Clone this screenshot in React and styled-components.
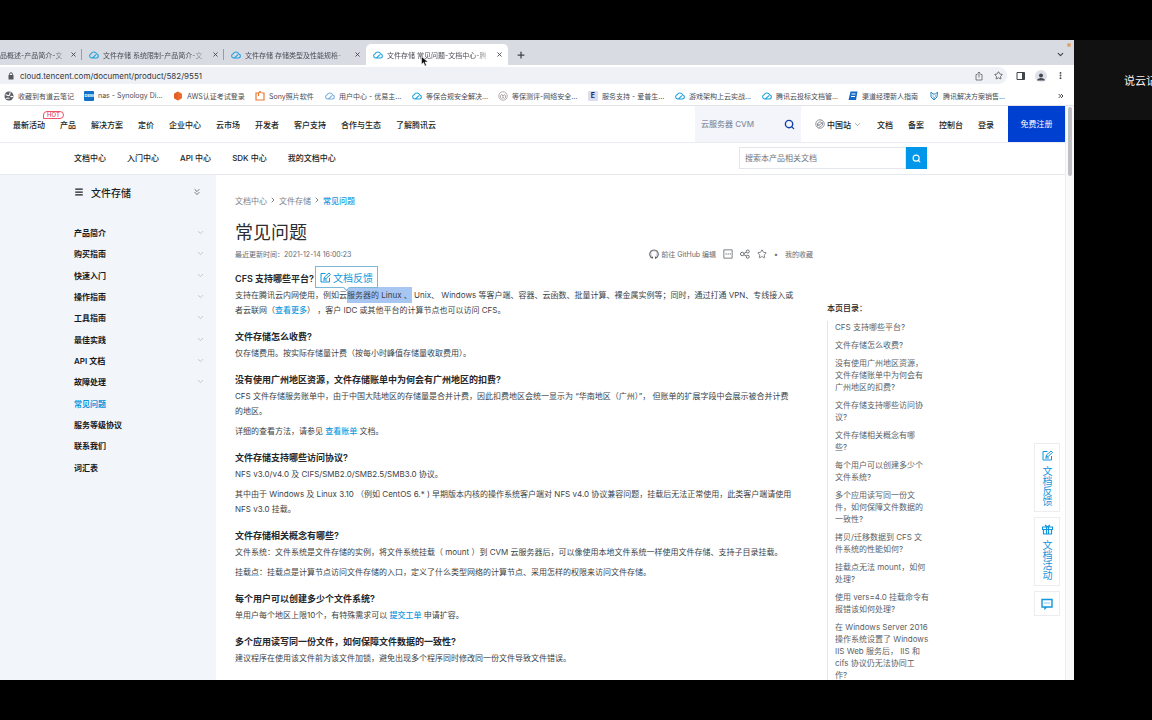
import React from "react";
import styled, { createGlobalStyle, css } from "styled-components";
import {
  ChevronDown,
  ChevronRight,
  ChevronsDown,
  ChevronsRight,
  Menu,
  MoreVertical,
  Plus,
  Search,
  Star,
  X,
} from "lucide-react";

/** Styles */
const GlobalStyle = createGlobalStyle`
  * {
    box-sizing: border-box;
  }
  body {
    margin: 0;
    background: #000;
    font-family: Inter, "Noto Sans CJK SC", sans-serif;
    font-size: 8px;
    color: #1c1e22;
  }
  h1, h2, h3, p, ul {
    margin: 0;
    padding: 0;
  }
  ul {
    list-style: none;
  }
  a {
    color: inherit;
    text-decoration: none;
  }
  button, input {
    margin: 0;
    padding: 0;
    border: 0;
    background: none;
    color: inherit;
    font: inherit;
  }
  svg {
    display: block;
    flex: none;
  }
`;

const Stage = styled.div`
  display: grid;
  grid-template-columns: minmax(0, 1fr) 78px;
  height: 100vh;
  padding: 40px 0;
  overflow: hidden;
`;
const Browser = styled.div`
  display: flex;
  flex-direction: column;
  min-height: 0;
  background: #fff;
`;
const Participant = styled.aside`
  height: 80px;
  padding-left: 50px;
  overflow: hidden;
  background: #111;
  color: #f2f2f2;
  font-size: 11px;
  line-height: 83px;
  white-space: nowrap;
`;

/** Browser chrome */
const TabStrip = styled.div`
  position: relative;
  display: flex;
  align-items: flex-end;
  flex: none;
  height: 25px;
  background: #d9dbe3;
`;
const Tab = styled.div`
  display: flex;
  align-items: center;
  gap: 4px;
  width: ${({ $cut }) => ($cut ? "82px" : "142px")};
  height: 21px;
  padding: 0 5px 0 ${({ $cut }) => ($cut ? "0" : "7px")};
  color: #4a4d55;
  font-size: 7px;
  ${({ $active }) =>
    $active &&
    css`
      border-radius: 5px 5px 0 0;
      background: #fff;
    `}
`;
const TabTitle = styled.span`
  flex: 1;
  overflow: hidden;
  white-space: nowrap;
  mask-image: linear-gradient(90deg, #000 82%, transparent);
`;
const TabDivider = styled.span`
  width: 1px;
  height: 11px;
  margin-bottom: 5px;
  margin-left: -1px;
  background: #9a9ca5;
`;
const IconButton = styled.button`
  display: flex;
  align-items: center;
  justify-content: center;
  color: ${({ $color }) => $color || "#3f4249"};
`;
const NewTab = styled(IconButton)`
  height: 21px;
  margin-left: 8px;
`;
const TabMenu = styled(IconButton)`
  height: 21px;
  margin-right: 9px;
  margin-left: auto;
`;
const RecordDot = styled.span`
  position: absolute;
  top: 3px;
  right: 3px;
  width: 4px;
  height: 4px;
  border-radius: 50%;
  background: #e0a36c;
`;
const Cursor = styled.svg`
  position: absolute;
  top: 16px;
  left: 421px;
`;
const AddressRow = styled.div`
  display: flex;
  align-items: center;
  flex: none;
  gap: 9px;
  height: 21px;
  padding-right: 9px;
`;
const AddressBar = styled.div`
  display: flex;
  align-items: center;
  flex: 1;
  gap: 10px;
  height: 17px;
  padding: 0 4px 0 8px;
  border-radius: 0 9px 9px 0;
  background: #f0f1f6;
`;
const AddressInput = styled.input`
  flex: 1;
  margin-left: -4px;
  color: #34373d;
  outline: none;
`;
const Avatar = styled.span`
  display: flex;
  align-items: flex-end;
  justify-content: center;
  width: 12px;
  height: 12px;
  overflow: hidden;
  border-radius: 50%;
  background: #dfe1e8;
`;
const Bookmarks = styled.div`
  display: flex;
  align-items: center;
  flex: none;
  height: 20px;
  padding: 0 9px 0 4px;
  border-bottom: 1px solid #e3e4e8;
`;
const Bookmark = styled.a`
  display: flex;
  align-items: center;
  gap: 4px;
  width: ${({ $width }) => $width}px;
  color: #494c53;
  font-size: 7px;
  white-space: nowrap;
`;
const More = styled(IconButton)`
  margin-left: auto;
`;
const Favicon = styled.span`
  display: flex;
  align-items: center;
  justify-content: center;
  flex: none;
  width: 10px;
  height: 10px;
  border-radius: 1px;
  background: ${({ $bg }) => $bg};
  color: ${({ $color }) => $color || "#fff"};
  font-size: ${({ $small }) => ($small ? "4px" : "7px")};
  font-weight: 700;
`;

/** Site */
const Viewport = styled.div`
  position: relative;
  display: grid;
  grid-template-columns: minmax(0, 1fr) 9px;
  flex: 1;
  min-height: 0;
  overflow: hidden;
`;
const Scrollbar = styled.div`
  padding: 1px 2px;
  border-left: 1px solid #ededf0;
  background: #fafafb;
`;
const Thumb = styled.div`
  height: 69px;
  border-radius: 3px;
  background: #bfc0c4;
`;
const Site = styled.div`
  min-width: 0;
`;
const TopBar = styled.header`
  display: flex;
  align-items: center;
  height: 37px;
  padding-left: 13px;
  border-bottom: 1px solid #ebecf1;
  font-weight: 500;
`;
const TopNav = styled.nav`
  display: flex;
  gap: 15px;
  white-space: nowrap;
`;
const TopLink = styled.a`
  position: relative;
`;
const Hot = styled.span`
  position: absolute;
  top: -8px;
  left: 30px;
  padding: 0 3px;
  border: 1px solid #ee5468;
  border-radius: 4px 4px 4px 0;
  color: #e5455a;
  font-size: 6px;
  line-height: 6px;
`;
const TopSearch = styled.form`
  display: flex;
  align-items: center;
  width: 106px;
  height: 36px;
  margin-left: auto;
  padding: 0 6px;
  background: #f4f5fa;
  color: #0f3fa8;
`;
const TopSearchInput = styled.input`
  flex: 1;
  min-width: 0;
  outline: none;
  &::placeholder {
    color: #8b90a0;
  }
`;
const Account = styled.div`
  display: flex;
  align-items: center;
  gap: 15px;
  padding: 0 14px;
  white-space: nowrap;
`;
const Region = styled(IconButton)`
  gap: 2px;
`;
const Register = styled.a`
  width: 57px;
  height: 36px;
  background: #0040d0;
  color: #fff;
  font-weight: 400;
  line-height: 36px;
  text-align: center;
`;
const SubBar = styled.div`
  display: flex;
  align-items: flex-start;
  justify-content: space-between;
  height: 32px;
  padding: 4px 138px 0 74px;
  border-bottom: 1px solid #e6e8ec;
`;
const SubNav = styled.nav`
  display: flex;
  gap: 21px;
  font-weight: 500;
  line-height: 22px;
`;
const DocSearch = styled.form`
  display: flex;
  width: 188px;
  height: 22px;
`;
const DocSearchInput = styled.input`
  flex: 1;
  min-width: 0;
  padding-left: 5px;
  border: 1px solid #e3e6eb;
  outline: none;
  &::placeholder {
    color: #70747c;
  }
`;
const DocSearchButton = styled(IconButton)`
  width: 21px;
  background: #0096ea;
`;
const Body = styled.div`
  display: grid;
  grid-template-columns: 216px minmax(0, 1fr) 238px;
`;
const Sidebar = styled.aside`
  min-height: 506px;
  padding: 7px 11px 0 74px;
  background: #f2f5fa;
`;
const SideTitle = styled.h2`
  display: flex;
  align-items: center;
  gap: 7px;
  height: 20px;
  padding-right: 3px;
  font-size: 10px;
  font-weight: 500;
  svg:last-child {
    margin-left: auto;
  }
`;
const SideList = styled.ul`
  display: grid;
  grid-auto-rows: 1fr;
  height: 256px;
  margin-top: 20px;
`;
const SideItem = styled.li`
  display: flex;
  align-items: center;
  justify-content: space-between;
  color: ${({ $active }) => ($active ? "#1296db" : "#16181c")};
  font-weight: 600;
  svg {
    color: #b3b8c1;
  }
`;

/** Article */
const Article = styled.main`
  padding: 17px 14px 0 19px;
  color: #3c3f45;
  white-space: nowrap;
`;
const Crumbs = styled.nav`
  display: flex;
  align-items: center;
  gap: 2px;
  height: 16px;
  color: #7d8189;
`;
const Crumb = styled.a`
  color: ${({ $current }) => $current && "#0f9ae0"};
  font-weight: ${({ $current }) => $current && "500"};
`;
const PageTitle = styled.h1`
  margin-top: 10px;
  color: #2b2d31;
  font-size: 18px;
  font-weight: 400;
  line-height: 30px;
`;
const Meta = styled.div`
  display: flex;
  align-items: center;
  justify-content: space-between;
  height: 12px;
  color: #666a71;
  font-size: 7px;
`;
const Actions = styled.div`
  display: flex;
  align-items: center;
  gap: 7px;
`;
const ActionLink = styled.a`
  display: flex;
  align-items: center;
  gap: 2px;
`;
const Question = styled.section`
  position: relative;
  margin-top: 11px;
`;
const QuestionTitle = styled.h3`
  margin-bottom: 2px;
  color: #24262a;
  font-size: 9px;
  font-weight: 600;
  line-height: 15px;
`;
const Paragraph = styled.p`
  line-height: 15px;
  & + & {
    margin-top: 5px;
  }
`;
const TextLink = styled.a`
  color: #0f9ae0;
  font-weight: 500;
`;
const Selection = styled.mark`
  padding: 3px 0;
  background: #a7c6f2;
  color: inherit;
`;
const Feedback = styled.button`
  position: absolute;
  top: -5px;
  left: 80px;
  display: flex;
  align-items: center;
  gap: 2px;
  height: 22px;
  padding: 0 4px;
  border: 1px solid #7db8d8;
  background: #fff;
  color: #1296db;
  font-size: 10px;
  &::after {
    content: "";
    position: absolute;
    bottom: -3px;
    left: 28px;
    width: 4px;
    height: 4px;
    border: solid #7db8d8;
    border-width: 0 1px 1px 0;
    background: #fff;
    transform: rotate(45deg);
  }
`;

/** Page contents */
const Toc = styled.aside`
  padding-top: 125px;
  color: #5b5f66;
  white-space: nowrap;
`;
const TocTitle = styled.h2`
  color: #24262a;
  font-size: 8px;
  font-weight: 500;
  line-height: 16px;
`;
const TocList = styled.ul`
  display: flex;
  flex-direction: column;
  gap: 6px;
  margin-top: 5px;
  padding-left: 7px;
  border-left: 1px solid #e3e5ea;
  line-height: 12px;
`;
const SideTools = styled.div`
  position: absolute;
  top: 337px;
  right: 14px;
  display: flex;
  flex-direction: column;
  gap: 5px;
`;
const Tool = styled.button`
  display: flex;
  flex-direction: column;
  align-items: center;
  gap: 5px;
  width: 26px;
  padding: 6px 0 5px;
  border: 1px solid #ebedf1;
  background: #fff;
  color: #1296db;
  font-size: 10px;
  line-height: 12px;
`;
const Vertical = styled.span`
  writing-mode: vertical-rl;
`;

/** Icons */
const CloudIcon = ({ size = 10, color = "#1ba2e0" }) => (
  <svg width={size} height={size} viewBox="0 0 20 20" fill="none" stroke={color} strokeWidth="2.2" strokeLinecap="round">
    <path d="M8 16h7a4 4 0 0 0 .6-7.9A6 6 0 0 0 4.4 7.6 4.3 4.3 0 0 0 5 16c1.5 0 2.6-.6 3.6-1.6l4.8-4.7" />
  </svg>
);
const GlobeIcon = () => (
  <svg width="10" height="10" viewBox="0 0 20 20">
    <circle cx="10" cy="10" r="9" fill="#5b5e65" />
    <path d="M3 8c3-1 4 2 7 1s0-4 3-6M5 16c1-3 4-2 6-1m2-3c2-2 3-1 5-1" fill="none" stroke="#fff" strokeWidth="2.2" />
  </svg>
);
const CubeIcon = () => (
  <svg width="10" height="10" viewBox="0 0 20 20">
    <path d="M10 1l8 4.500v9L10 19l-8-4.500v-9z" fill="#ee6a2c" />
    <path d="M10 1v18l-8-4.500v-9z" fill="#d9531e" opacity=".5" />
  </svg>
);
const BagIcon = () => (
  <svg width="10" height="10" viewBox="0 0 20 20" fill="none" stroke="#ee7a33" strokeWidth="2.4">
    <path d="M6 4H2v14h16V4h-4M7 10V4l3-3 3 3" />
  </svg>
);
const RingIcon = () => (
  <svg width="10" height="10" viewBox="0 0 20 20" fill="none" stroke="#9b9298" strokeWidth="1.5">
    <circle cx="10" cy="10" r="8.5" />
    <path d="M5 14V9l3-2 2 4 2-4 3 2v5M7 16l3-4 3 4" />
  </svg>
);
const PageIcon = () => (
  <svg width="10" height="10" viewBox="0 0 20 20">
    <path d="M5 1h14l-3 17H1z" fill="#1769c7" />
    <path d="M7 6h8M6 11h8" stroke="#fff" strokeWidth="2" />
  </svg>
);
const FoxIcon = () => (
  <svg width="10" height="10" viewBox="0 0 20 20" fill="none" stroke="#2687c9" strokeWidth="2">
    <path d="M4 2l4 4h5l4-4-1 10-6 6-6-6zM7 10h2m3 0h2M8 14h4" />
  </svg>
);
const LockIcon = () => (
  <svg width="6" height="8" viewBox="0 0 12 16">
    <path d="M3 7V4.500a3 3 0 0 1 6 0V7" fill="none" stroke="#55585f" strokeWidth="2" />
    <path d="M1 6h10v9H1z" fill="#55585f" />
  </svg>
);
const ShareIcon = () => (
  <svg width="10" height="10" viewBox="0 0 20 20" fill="none" stroke="#5d6067" strokeWidth="1.6">
    <path d="M7 7H4v11h12V7h-3M10 13V2M7 5l3-3 3 3" />
  </svg>
);
const PanelIcon = () => (
  <svg width="10" height="10" viewBox="0 0 20 20">
    <path d="M2 3h15v14H2z" fill="none" stroke="#41444b" strokeWidth="2" />
    <path d="M12 3h5v14h-5z" fill="#41444b" />
  </svg>
);
const CommentIcon = ({ size = 12, tail }) => (
  <svg width={size} height={size} viewBox="0 0 24 24" fill="none" stroke="currentColor" strokeWidth={tail ? 2.8 : 2}>
    <path d={tail ? "M2 3h20v15H11l-3 3v-3H2z" : "M2 2h20v20H2z"} />
    <path d={tail ? "M7 10h2m2 0h2m2 0h2" : "M6 12h3m2 0h3m2 0h3"} strokeWidth="2.4" />
  </svg>
);
const StationIcon = () => (
  <svg width="10" height="10" viewBox="0 0 20 20" fill="none" stroke="#74777e" strokeWidth="1.5">
    <circle cx="10" cy="10" r="8.5" />
    <path d="M13 3L5 9v5l3-1 7-6v5l-8 6M5 10l4 1m2-4l4 1" />
  </svg>
);
const GithubIcon = () => (
  <svg width="10" height="10" viewBox="0 0 20 20" fill="none" stroke="#5f636a" strokeWidth="2.2">
    <path d="M7 19v-3.500C4.500 14 4 11.500 4.500 8.500L4 3l3.500 1.500a10 10 0 0 1 5 0L16 3l-.5 5.500c.5 3 0 5.500-2.500 7V19M7 18c-3 .5-3.500-2-5.500-2.500" opacity=".25" />
    <path d="M7 18.500a8.500 8.500 0 1 1 6 0v-3M7 18.500v-3" />
  </svg>
);
const NodesIcon = () => (
  <svg width="10" height="10" viewBox="0 0 20 20" fill="none" stroke="#5f636a" strokeWidth="1.8">
    <circle cx="4.5" cy="10" r="3.5" />
    <circle cx="15.5" cy="5" r="3" />
    <circle cx="15.5" cy="15.500" r="3" />
    <path d="M8 9l5-3M8 11.500l5 2.500" />
  </svg>
);
const EditIcon = () => (
  <svg width="11" height="11" viewBox="0 0 22 22" fill="none" stroke="currentColor" strokeWidth="2">
    <path d="M11 3H2v17h17v-8M8 14l1-4 9-8 3 3-9 8z" />
    <path d="M6 16h8" />
  </svg>
);
const GiftIcon = () => (
  <svg width="11" height="11" viewBox="0 0 22 22" fill="none" stroke="currentColor" strokeWidth="2.4">
    <path d="M1 6h20v5H1zM3 11v9h16v-9M9 6v14M13 6v14M11 6L6 2M11 6l5-4" />
  </svg>
);

/** Data */
const bookmarks = [
  { label: "收藏到有道云笔记", width: 80, icon: <GlobeIcon /> },
  { label: "nas - Synology Di...", width: 89, icon: <Favicon $bg="#1071c6" $small>DSM</Favicon> },
  { label: "AWS认证考试登录", width: 82, icon: <CubeIcon /> },
  { label: "Sony照片软件", width: 70, icon: <BagIcon /> },
  { label: "用户中心 - 优易主...", width: 87, icon: <CloudIcon color="#77aee0" /> },
  { label: "等保合规安全解决...", width: 86, icon: <CloudIcon /> },
  { label: "等保测评-网络安全...", width: 90, icon: <RingIcon /> },
  { label: "服务支持 - 爱普生...", width: 87, icon: <Favicon $bg="#dcdcf0" $color="#26235e">E</Favicon> },
  { label: "游戏架构上云实战...", width: 87, icon: <CloudIcon /> },
  { label: "腾讯云投标文档管...", width: 86, icon: <CloudIcon /> },
  { label: "渠道经理新人指南", width: 81, icon: <PageIcon /> },
  { label: "腾讯解决方案销售...", width: 80, icon: <FoxIcon /> },
];

const topLinks = ["最新活动", "产品", "解决方案", "定价", "企业中心", "云市场", "开发者", "客户支持", "合作与生态", "了解腾讯云"];
const subLinks = ["文档中心", "入门中心", "API 中心", "SDK 中心", "我的文档中心"];

const sideItems = [
  { label: "产品简介", open: true },
  { label: "购买指南", open: true },
  { label: "快速入门", open: true },
  { label: "操作指南", open: true },
  { label: "工具指南", open: true },
  { label: "最佳实践", open: true },
  { label: "API 文档", open: true },
  { label: "故障处理", open: true },
  { label: "常见问题", active: true },
  { label: "服务等级协议" },
  { label: "联系我们" },
  { label: "词汇表" },
];

const toc = [
  ["CFS 支持哪些平台?"],
  ["文件存储怎么收费?"],
  ["没有使用广州地区资源，", "文件存储账单中为何会有", "广州地区的扣费?"],
  ["文件存储支持哪些访问协", "议?"],
  ["文件存储相关概念有哪", "些?"],
  ["每个用户可以创建多少个", "文件系统?"],
  ["多个应用读写同一份文", "件，如何保障文件数据的", "一致性?"],
  ["拷贝/迁移数据到 CFS 文", "件系统的性能如何?"],
  ["挂载点无法 mount，如何", "处理?"],
  ["使用 vers=4.0 挂载命令有", "报错该如何处理?"],
  ["在 Windows Server 2016", "操作系统设置了 Windows", "IIS Web 服务后， IIS 和", "cifs 协议仍无法协同工", "作?"],
];

/** Components */
function BrowserChrome() {
  return (
    <>
      <TabStrip>
        <Tab $cut>
          <TabTitle>品概述-产品简介-文</TabTitle>
          <IconButton aria-label="关闭"><X size={7} strokeWidth={3} /></IconButton>
        </Tab>
        <TabDivider />
        <Tab>
          <CloudIcon />
          <TabTitle>文件存储 系统限制-产品简介-文</TabTitle>
          <IconButton aria-label="关闭"><X size={7} strokeWidth={3} /></IconButton>
        </Tab>
        <TabDivider />
        <Tab>
          <CloudIcon />
          <TabTitle>文件存储 存储类型及性能规格-</TabTitle>
          <IconButton aria-label="关闭"><X size={7} strokeWidth={3} /></IconButton>
        </Tab>
        <Tab $active>
          <CloudIcon />
          <TabTitle>文件存储 常见问题-文档中心-腾</TabTitle>
          <IconButton aria-label="关闭"><X size={7} strokeWidth={3} /></IconButton>
        </Tab>
        <NewTab aria-label="新标签页"><Plus size={10} strokeWidth={3} /></NewTab>
        <TabMenu aria-label="搜索标签页"><ChevronDown size={9} strokeWidth={3} /></TabMenu>
        <RecordDot />
        <Cursor width="8" height="11" viewBox="0 0 16 22">
          <path d="M1 1v16l4-4 3 7 3-1-3-7h6z" fill="#111" stroke="#fff" strokeWidth="1" />
        </Cursor>
      </TabStrip>
      <AddressRow>
        <AddressBar>
          <LockIcon />
          <AddressInput aria-label="地址" defaultValue="cloud.tencent.com/document/product/582/9551" />
          <IconButton aria-label="分享"><ShareIcon /></IconButton>
          <IconButton aria-label="收藏"><Star size={9} strokeWidth={2} /></IconButton>
        </AddressBar>
        <IconButton aria-label="侧边栏"><PanelIcon /></IconButton>
        <Avatar>
          <svg width="10" height="10" viewBox="0 0 20 20" fill="#454850">
            <circle cx="10" cy="7" r="4" />
            <path d="M2 17c0-7 16-7 16 0z" />
          </svg>
        </Avatar>
        <IconButton aria-label="更多"><MoreVertical size={9} strokeWidth={3} /></IconButton>
      </AddressRow>
      <Bookmarks>
        {bookmarks.map(({ label, width, icon }) => (
          <Bookmark key={label} href="#" $width={width}>
            {icon}
            {label}
          </Bookmark>
        ))}
        <More aria-label="更多书签"><ChevronsRight size={8} strokeWidth={3} /></More>
      </Bookmarks>
    </>
  );
}

function Header() {
  return (
    <>
      <TopBar>
        <TopNav>
          {topLinks.map((label, i) => (
            <TopLink key={label} href="#">
              {label}
              {i === 0 && <Hot>HOT</Hot>}
            </TopLink>
          ))}
        </TopNav>
        <TopSearch>
          <TopSearchInput aria-label="搜索" placeholder="云服务器 CVM" />
          <IconButton type="button" aria-label="搜索" $color="#0f3fa8"><Search size={11} strokeWidth={3} /></IconButton>
        </TopSearch>
        <Account>
          <Region $color="#1c1e22">
            <StationIcon />
            中国站
            <ChevronDown size={9} strokeWidth={1} />
          </Region>
          <a href="#">文档</a>
          <a href="#">备案</a>
          <a href="#">控制台</a>
          <a href="#">登录</a>
        </Account>
        <Register href="#">免费注册</Register>
      </TopBar>
      <SubBar>
        <SubNav>
          {subLinks.map((label) => (
            <a key={label} href="#">{label}</a>
          ))}
        </SubNav>
        <DocSearch>
          <DocSearchInput aria-label="搜索文档" placeholder="搜索本产品相关文档" />
          <DocSearchButton type="button" aria-label="搜索文档" $color="#fff"><Search size={9} strokeWidth={3} /></DocSearchButton>
        </DocSearch>
      </SubBar>
    </>
  );
}

function SideMenu() {
  return (
    <Sidebar>
      <SideTitle>
        <Menu size={10} strokeWidth={3} />
        文件存储
        <ChevronsDown size={10} strokeWidth={2} color="#555961" />
      </SideTitle>
      <SideList>
        {sideItems.map(({ label, open, active }) => (
          <SideItem key={label} $active={active}>
            <a href="#">{label}</a>
            {open && <ChevronDown size={9} strokeWidth={2} />}
          </SideItem>
        ))}
      </SideList>
    </Sidebar>
  );
}

function Doc() {
  return (
    <Article>
      <Crumbs>
        <Crumb href="#">文档中心</Crumb>
        <ChevronRight size={8} strokeWidth={3} />
        <Crumb href="#">文件存储</Crumb>
        <ChevronRight size={8} strokeWidth={3} />
        <Crumb href="#" $current>常见问题</Crumb>
      </Crumbs>
      <PageTitle>常见问题</PageTitle>
      <Meta>
        <span>最近更新时间：2021-12-14 16:00:23</span>
        <Actions>
          <ActionLink href="#">
            <GithubIcon />
            前往 GitHub 编辑
          </ActionLink>
          <CommentIcon size={10} />
          <NodesIcon />
          <Star size={10} strokeWidth={2} />
          <span>•</span>
          <a href="#">我的收藏</a>
        </Actions>
      </Meta>
      <Question>
        <QuestionTitle>CFS 支持哪些平台?</QuestionTitle>
        <Paragraph>
          支持在腾讯云内网使用，例如云<Selection>服务器的 Linux 、</Selection> Unix、 Windows 等客户端、容器、云函数、批量计算、裸金属实例等；同时，通过打通 VPN、专线接入或
          <br />
          者云联网（<TextLink href="#">查看更多</TextLink>） ，客户 IDC 或其他平台的计算节点也可以访问 CFS。
        </Paragraph>
        <Feedback>
          <EditIcon />
          文档反馈
        </Feedback>
      </Question>
      <Question>
        <QuestionTitle>文件存储怎么收费?</QuestionTitle>
        <Paragraph>仅存储费用。按实际存储量计费（按每小时峰值存储量收取费用）。</Paragraph>
      </Question>
      <Question>
        <QuestionTitle>没有使用广州地区资源，文件存储账单中为何会有广州地区的扣费?</QuestionTitle>
        <Paragraph>
          CFS 文件存储服务账单中，由于中国大陆地区的存储量是合并计费，因此扣费地区会统一显示为 “华南地区（广州）”， 但账单的扩展字段中会展示被合并计费
          <br />
          的地区。
        </Paragraph>
        <Paragraph>
          详细的查看方法，请参见 <TextLink href="#">查看账单</TextLink> 文档。
        </Paragraph>
      </Question>
      <Question>
        <QuestionTitle>文件存储支持哪些访问协议?</QuestionTitle>
        <Paragraph>NFS v3.0/v4.0 及 CIFS/SMB2.0/SMB2.5/SMB3.0 协议。</Paragraph>
        <Paragraph>
          其中由于 Windows 及 Linux 3.10 （例如 CentOS 6.* ) 早期版本内核的操作系统客户端对 NFS v4.0 协议兼容问题，挂载后无法正常使用，此类客户端请使用
          <br />
          NFS v3.0 挂载。
        </Paragraph>
      </Question>
      <Question>
        <QuestionTitle>文件存储相关概念有哪些?</QuestionTitle>
        <Paragraph>文件系统：文件系统是文件存储的实例，将文件系统挂载（ mount ）到 CVM 云服务器后，可以像使用本地文件系统一样使用文件存储、支持子目录挂载。</Paragraph>
        <Paragraph>挂载点：挂载点是计算节点访问文件存储的入口，定义了什么类型网络的计算节点、采用怎样的权限来访问文件存储。</Paragraph>
      </Question>
      <Question>
        <QuestionTitle>每个用户可以创建多少个文件系统?</QuestionTitle>
        <Paragraph>
          单用户每个地区上限10个，有特殊需求可以 <TextLink href="#">提交工单</TextLink> 申请扩容。
        </Paragraph>
      </Question>
      <Question>
        <QuestionTitle>多个应用读写同一份文件，如何保障文件数据的一致性?</QuestionTitle>
        <Paragraph>建议程序在使用该文件前为该文件加锁，避免出现多个程序同时修改同一份文件导致文件错误。</Paragraph>
      </Question>
    </Article>
  );
}

function Contents() {
  return (
    <Toc>
      <TocTitle>本页目录：</TocTitle>
      <TocList>
        {toc.map((lines) => (
          <li key={lines[0]}>
            <a href="#">
              {lines.map((line, i) => (
                <React.Fragment key={line}>
                  {i > 0 && <br />}
                  {line}
                </React.Fragment>
              ))}
            </a>
          </li>
        ))}
      </TocList>
    </Toc>
  );
}

function App() {
  return (
    <Stage>
      <GlobalStyle />
      <Browser>
        <BrowserChrome />
        <Viewport>
          <Site>
            <Header />
            <Body>
              <SideMenu />
              <Doc />
              <Contents />
            </Body>
          </Site>
          <Scrollbar>
            <Thumb />
          </Scrollbar>
          <SideTools>
            <Tool>
              <EditIcon />
              <Vertical>文档反馈</Vertical>
            </Tool>
            <Tool>
              <GiftIcon />
              <Vertical>文档活动</Vertical>
            </Tool>
            <Tool aria-label="在线咨询">
              <CommentIcon tail />
            </Tool>
          </SideTools>
        </Viewport>
      </Browser>
      <Participant>说云记</Participant>
    </Stage>
  );
}
export default App;
